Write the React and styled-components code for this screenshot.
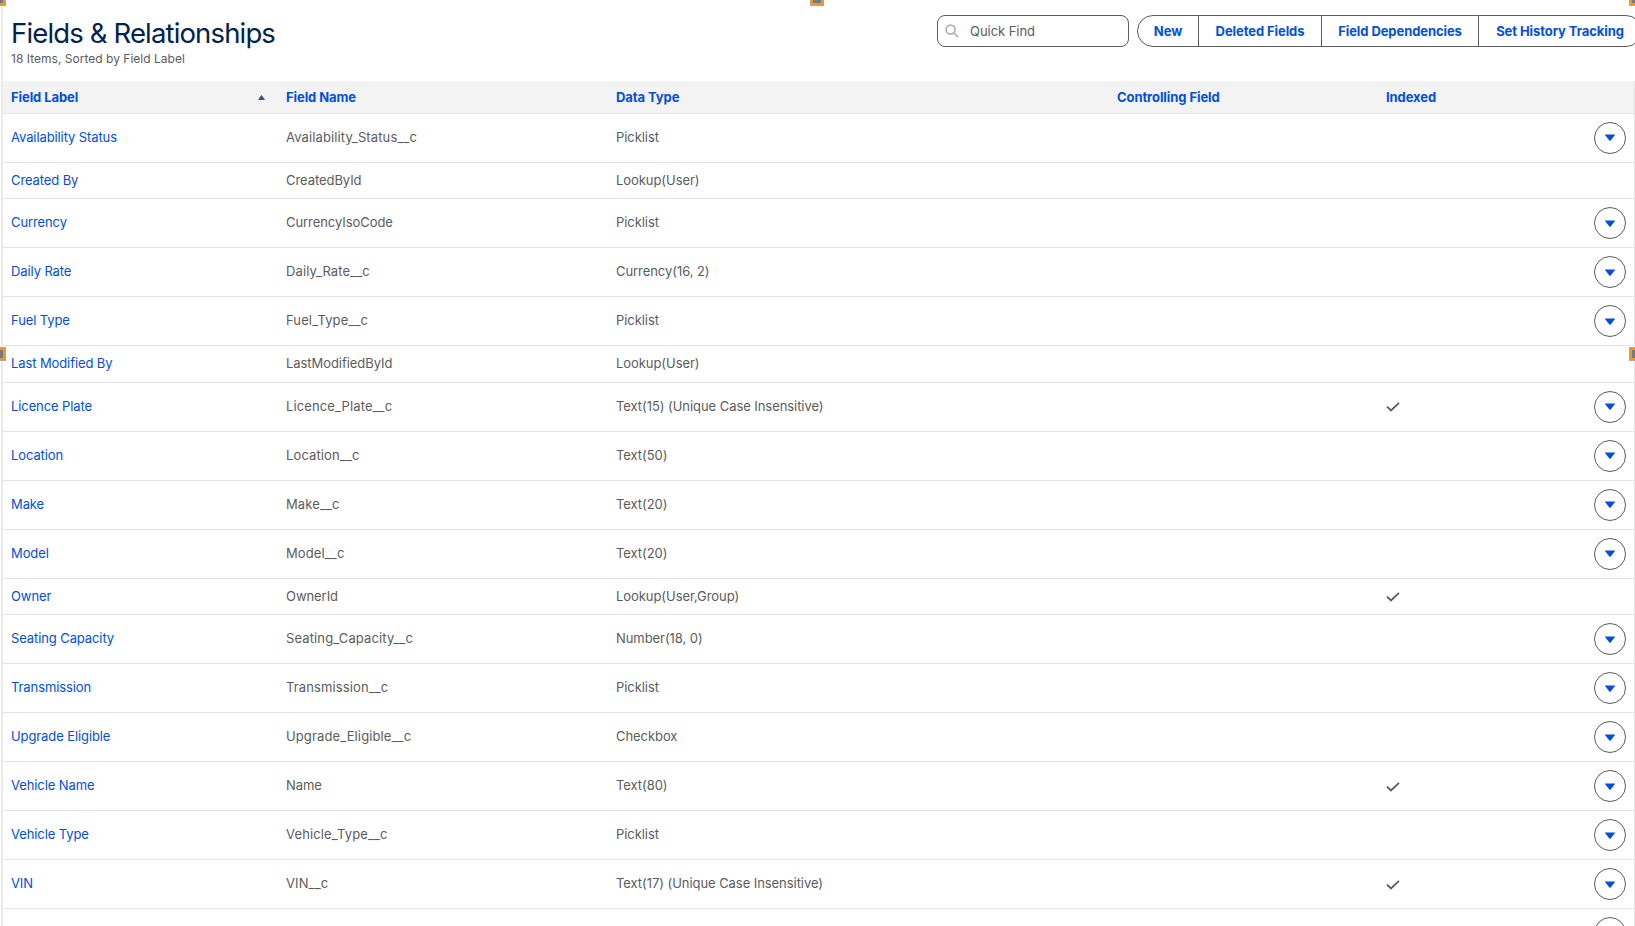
import styled, { createGlobalStyle } from "styled-components";

const fields = [
  { label: "Availability Status", name: "Availability_Status__c", type: "Picklist", menu: true },
  { label: "Created By", name: "CreatedById", type: "Lookup(User)", height: 36 },
  { label: "Currency", name: "CurrencyIsoCode", type: "Picklist", menu: true, low: true },
  { label: "Daily Rate", name: "Daily_Rate__c", type: "Currency(16, 2)", menu: true, low: true },
  { label: "Fuel Type", name: "Fuel_Type__c", type: "Picklist", menu: true, low: true },
  { label: "Last Modified By", name: "LastModifiedById", type: "Lookup(User)", height: 37 },
  { label: "Licence Plate", name: "Licence_Plate__c", type: "Text(15) (Unique Case Insensitive)", indexed: true, menu: true },
  { label: "Location", name: "Location__c", type: "Text(50)", menu: true },
  { label: "Make", name: "Make__c", type: "Text(20)", menu: true },
  { label: "Model", name: "Model__c", type: "Text(20)", menu: true },
  { label: "Owner", name: "OwnerId", type: "Lookup(User,Group)", indexed: true, height: 36 },
  { label: "Seating Capacity", name: "Seating_Capacity__c", type: "Number(18, 0)", menu: true, low: true },
  { label: "Transmission", name: "Transmission__c", type: "Picklist", menu: true, low: true },
  { label: "Upgrade Eligible", name: "Upgrade_Eligible__c", type: "Checkbox", menu: true, low: true },
  { label: "Vehicle Name", name: "Name", type: "Text(80)", indexed: true, menu: true, low: true },
  { label: "Vehicle Type", name: "Vehicle_Type__c", type: "Picklist", menu: true, low: true },
  { label: "VIN", name: "VIN__c", type: "Text(17) (Unique Case Insensitive)", indexed: true, menu: true, low: true },
  { label: "", name: "", type: "", menu: true, low: true },
];

const App = () => {
  return (
    <Page>
      <GlobalStyle />
      <Panel>
        <Header>
          <div>
            <Title>Fields &amp; Relationships</Title>
            <Subtitle>18 Items, Sorted by Field Label</Subtitle>
          </div>
          <Actions>
            <SearchBox>
              <svg width="14" height="14" viewBox="0 0 14 14" fill="none" stroke="#aeaeae" strokeWidth="1.6">
                <circle cx="5.6" cy="5.6" r="4.5" />
                <path d="M9 9l3.8 3.8" strokeLinecap="round" />
              </svg>
              <input placeholder="Quick Find" />
            </SearchBox>
            <ButtonGroup>
              <Button $width={62}>New</Button>
              <Button $width={124}>Deleted Fields</Button>
              <Button $width={158}>Field Dependencies</Button>
              <Button $width={164}>Set History Tracking</Button>
            </ButtonGroup>
          </Actions>
        </Header>
        <Table>
          <HeadRow>
            <HeadCell>
              Field Label
              <SortIcon width="7" height="5" viewBox="0 0 7 5">
                <path d="M0 5L3 0.4Q3.5 0 4 0.4L7 5z" fill="#3e5373" />
              </SortIcon>
            </HeadCell>
            <HeadCell>Field Name</HeadCell>
            <HeadCell>Data Type</HeadCell>
            <HeadCell>Controlling Field</HeadCell>
            <HeadCell>Indexed</HeadCell>
          </HeadRow>
          {fields.map((field) => (
            <Row key={field.name} $height={field.height || 49} $low={field.low}>
              <LabelCell>{field.label}</LabelCell>
              <TextCell $wide={field.name.includes("_")}>{field.name}</TextCell>
              <TextCell>{field.type}</TextCell>
              <Cell />
              <Cell>
                {field.indexed && (
                  <svg width="14" height="10" viewBox="0 0 14 10" fill="none" stroke="#5c5c5c" strokeWidth="1.8">
                    <path d="M1 4.6L5 8.4L13 0.8" />
                  </svg>
                )}
              </Cell>
              {field.menu && (
                <MenuButton>
                  <svg width="10" height="8" viewBox="0 0 10 8">
                    <path d="M0 0.5h10v0.5L5.4 6.8Q5 7.1 4.6 6.8L0 1z" fill="#0250d9" />
                  </svg>
                </MenuButton>
              )}
            </Row>
          ))}
        </Table>
      </Panel>
      <Handle $left={-8} $top={-8} />
      <Handle $left={810} $top={-8} />
      <Handle $left={1629} $top={-8} />
      <Handle $left={-8} $top={347} />
      <Handle $left={1629} $top={347} />
    </Page>
  );
};

const GlobalStyle = createGlobalStyle`
  * {
    box-sizing: border-box;
  }

  body {
    margin: 0;
    overflow: hidden;
    background-color: #fff;
    font-family: Inter, "Liberation Sans", sans-serif;
    font-size: 13px;
    color: #5c5c5c;
  }
`;

const Page = styled.div`
  position: relative;
  width: 1635px;
  height: 926px;
  overflow: hidden;
`;

const Panel = styled.div`
  margin-left: 1px;
  border-left: 2px solid #ebebeb;
`;

const Header = styled.div`
  display: flex;
  justify-content: space-between;
  height: 81px;
  padding: 15px 0 0 8px;
`;

const Title = styled.h1`
  margin: 2px 0 0;
  font-size: 27.5px;
  font-weight: 400;
  line-height: 32px;
  letter-spacing: -0.85px;
  color: #03234d;
`;

const Subtitle = styled.p`
  margin: 1px 0 0;
  font-size: 12px;
  line-height: 18px;
  letter-spacing: 0.02px;
`;

const Actions = styled.div`
  display: flex;
  flex-shrink: 0;
  gap: 8px;
  width: 698px;
`;

const SearchBox = styled.label`
  display: flex;
  align-items: center;
  gap: 11px;
  flex-shrink: 0;
  width: 192px;
  height: 32px;
  padding-left: 7px;
  border: 1px solid #5c5c5c;
  border-radius: 8px;

  input {
    width: 140px;
    padding: 0;
    border: none;
    outline: none;
    font: inherit;
    letter-spacing: -0.05px;
  }

  input::placeholder {
    color: #5c5c5c;
  }
`;

const ButtonGroup = styled.div`
  display: flex;
  flex-shrink: 0;
  height: 32px;
`;

const Button = styled.button`
  flex-shrink: 0;
  width: ${(props) => props.$width}px;
  margin-right: -1px;
  padding: 0;
  border: 1px solid #5c5c5c;
  background-color: #fff;
  font: inherit;
  font-weight: 700;
  letter-spacing: -0.08px;
  white-space: nowrap;
  color: #0250d9;

  &:first-child {
    border-radius: 16px 0 0 16px;
  }

  &:last-child {
    border-radius: 0 16px 16px 0;
  }
`;

const Table = styled.div`
  border-right: 1px solid #e5e5e5;
`;

const Row = styled.div`
  display: grid;
  grid-template-columns: 275px 330px 501px 269px 1fr 32px;
  align-items: center;
  height: ${(props) => props.$height}px;
  padding: 0 8px;
  border-bottom: 1px solid #e5e5e5;

  svg {
    margin-top: ${(props) => (props.$low ? "2px" : "0")};
  }
`;

const HeadRow = styled(Row)`
  height: 33px;
  background-color: #f3f3f3;
`;

const Cell = styled.div`
  display: flex;
  align-items: center;
  line-height: 20px;
  white-space: nowrap;
`;

const HeadCell = styled(Cell)`
  font-weight: 700;
  letter-spacing: -0.08px;
  color: #0250d9;
`;

const SortIcon = styled.svg`
  margin: 0 21px 0 auto;
`;

const TextCell = styled(Cell)`
  padding-bottom: 2px;
  letter-spacing: ${(props) => (props.$wide ? "0.12px" : "-0.06px")};
`;

const LabelCell = styled(TextCell)`
  letter-spacing: -0.1px;
  color: #0250d9;
`;

const MenuButton = styled.button`
  display: flex;
  align-items: center;
  justify-content: center;
  width: 32px;
  height: 32px;
  padding: 0;
  border: 1px solid #5c5c5c;
  border-radius: 50%;
  background-color: #fff;
`;

/* selection grips over the edges */
const Handle = styled.div`
  position: absolute;
  left: ${(props) => props.$left}px;
  top: ${(props) => props.$top}px;
  width: 14px;
  height: 14px;
  border: 1px solid #a8a8a8;
  background-color: #747b82;
  box-shadow: inset 0 0 0 2px #ef9723;
`;

export default App;
